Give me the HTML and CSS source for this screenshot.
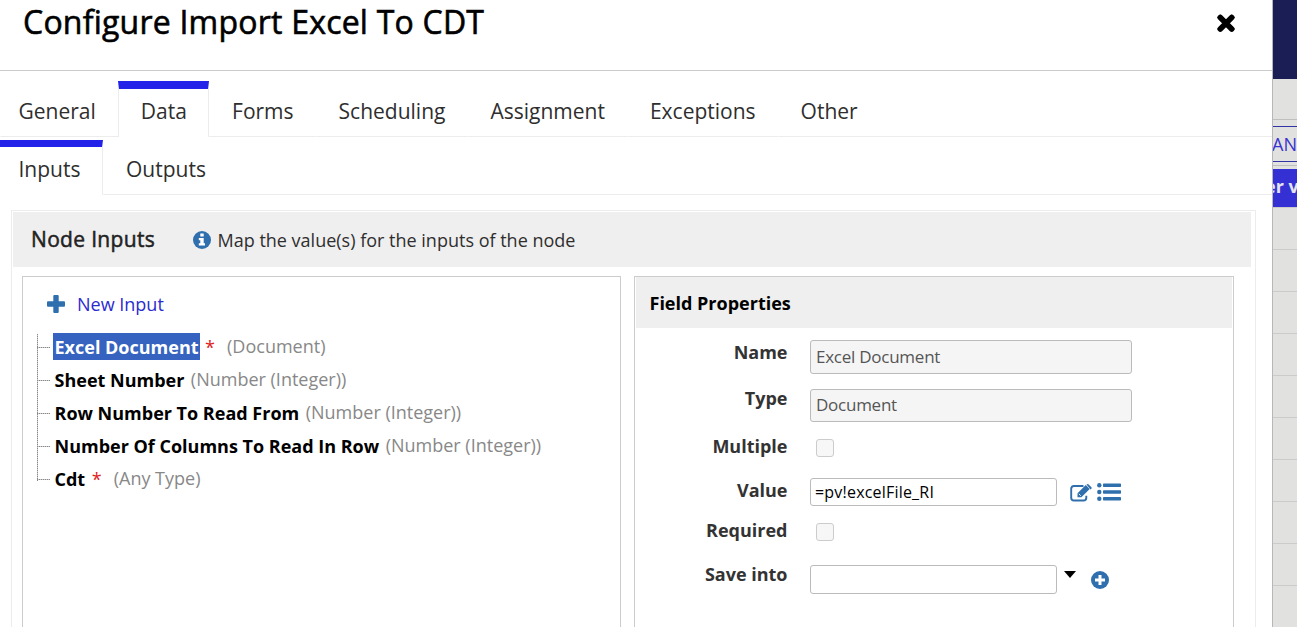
FILE: index.html
```html
<!DOCTYPE html>
<html lang="en">
<head>
  <meta charset="UTF-8">
  <meta name="viewport" content="width=device-width, initial-scale=1.0">
  <title>Configure Import Excel To CDT</title>
  <link rel="stylesheet" href="styles.css">
</head>
<body>
  <div class="page">
    <div class="dialog">
      <header class="dialog-header">
        <h1>Configure Import Excel To CDT</h1>
        <svg class="close" width="20" height="19" viewBox="0 0 20 19"><path d="M4.300 3.500L15.700 14.900M15.700 3.500L4.300 14.900" stroke="#000" stroke-width="4.400" stroke-linecap="square"/><path d="M4.300 3.500L15.700 14.900M15.700 3.500L4.300 14.900" stroke="#000" stroke-width="5.600" stroke-linecap="round"/></svg>
      </header>

      <nav class="tabs">
        <a class="tab">General</a>
        <a class="tab active">Data</a>
        <a class="tab">Forms</a>
        <a class="tab">Scheduling</a>
        <a class="tab">Assignment</a>
        <a class="tab">Exceptions</a>
        <a class="tab">Other</a>
        <span class="tab-rest"></span>
      </nav>

      <nav class="tabs subtabs">
        <a class="tab active">Inputs</a>
        <a class="tab">Outputs</a>
        <span class="tab-rest"></span>
      </nav>

      <section class="panel">
        <div class="panel-header">
          <h2>Node Inputs</h2>
          <svg width="18" height="18" viewBox="0 0 18 18"><circle cx="9" cy="9" r="9" fill="#2f6fad"/><path d="M7.300 2.500h3.400v3H7.300zM5.800 7h4.900v5.200H12v2.300H5.800v-2.300h1.500V9.300H5.800z" fill="#fff"/></svg>
          <span class="hint">Map the value(s) for the inputs of the node</span>
        </div>

        <div class="columns">
          <div class="box">
            <div class="new-input">
              <svg width="18" height="18" viewBox="0 0 18 18"><path d="M7.300 0h3.400q1 0 1 1v5.300H17q1 0 1 1v3.400q0 1-1 1h-5.300V17q0 1-1 1H7.300q-1 0-1-1v-5.300H1q-1 0-1-1V7.300q0-1 1-1h5.300V1q0-1 1-1z" fill="#2f6fad"/></svg>
              <a>New Input</a>
            </div>
            <ul class="tree">
              <li><b class="selected">Excel Document</b><i>*</i><span>(Document)</span></li>
              <li><b>Sheet Number</b><span>(Number (Integer))</span></li>
              <li><b>Row Number To Read From</b><span>(Number (Integer))</span></li>
              <li><b>Number Of Columns To Read In Row</b><span>(Number (Integer))</span></li>
              <li><b>Cdt</b><i>*</i><span>(Any Type)</span></li>
            </ul>
          </div>

          <div class="box">
            <h3>Field Properties</h3>
            <div class="form">
              <div class="row row-name">
                <label>Name</label>
                <div class="field disabled">Excel Document</div>
              </div>
              <div class="row row-type">
                <label>Type</label>
                <div class="field disabled">Document</div>
              </div>
              <div class="row">
                <label>Multiple</label>
                <div class="check"></div>
              </div>
              <div class="row row-value">
                <label>Value</label>
                <div class="field short">=pv!excelFile_RI</div>
                <svg class="edit" width="22" height="18" viewBox="0 0 22 18"><path d="M13.500 2H4Q1.200 2 1.200 4.800v8.900Q1.200 16.500 4 16.500h9.500q2.800 0 2.800-2.800v-2" fill="none" stroke="#2f6fad" stroke-width="1.900"/><path d="M7.500 9.300l8.300-8.300 3.900 3.900-8.300 8.300H7.500z" fill="#2f6fad"/><path d="M16.500.6l.6-.4q.7-.4 1.300.1l3 3q.6.700 0 1.400l-.9.800z" fill="#2f6fad"/><path d="M8.800 9.800l2 2" stroke="#fff" stroke-width=".9"/></svg>
                <svg class="list" width="24" height="18" viewBox="0 0 24 18"><g fill="#2f6fad"><circle cx="2.300" cy="2.200" r="2.200"/><circle cx="2.300" cy="9" r="2.200"/><circle cx="2.300" cy="15.800" r="2.200"/><rect x="6" y=".5" width="18" height="3.500" rx=".7"/><rect x="6" y="7.250" width="18" height="3.500" rx=".7"/><rect x="6" y="14" width="18" height="3.500" rx=".7"/></g></svg>
              </div>
              <div class="row">
                <label>Required</label>
                <div class="check"></div>
              </div>
              <div class="row row-save">
                <label>Save into</label>
                <div class="field short"></div>
                <svg class="caret" width="12" height="7" viewBox="0 0 12 7"><path d="M0 0h12L6 7z" fill="#000"/></svg>
                <svg class="add" width="18" height="18" viewBox="0 0 18 18"><circle cx="9" cy="9" r="9" fill="#2f6fad"/><path d="M9 4v10M4 9h10" stroke="#fff" stroke-width="3"/></svg>
              </div>
            </div>
          </div>
        </div>
      </section>
    </div>

    <!-- page behind the dialog -->
    <aside class="behind">
      <div class="behind-top"></div>
      <div class="behind-bar"></div>
      <div class="behind-btn">AN</div>
      <div class="behind-head">er v</div>
      <div class="behind-rows"></div>
    </aside>
  </div>
</body>
</html>
```

FILE: styles.css
```css
* {
  box-sizing: border-box;
}
body {
  margin: 0;
  font-family: "Open Sans", sans-serif;
  background-color: #fff;
  color: #2e2e2e;
}
h1, h2, h3, ul {
  margin: 0;
  padding: 0;
}
svg {
  display: block;
  flex: none;
}
.page {
  display: flex;
  width: 1297px;
  height: 627px;
  overflow: hidden;
}
.dialog {
  width: 1273px;
  height: 627px;
  border-right: 1px solid #b5b7bb;
  overflow: hidden;
  white-space: nowrap;
}
.dialog-header {
  display: flex;
  justify-content: space-between;
  height: 71px;
  padding: 0 36px 0 23px;
  border-bottom: 1px solid #ccc;
}
h1 {
  font-size: 32px;
  line-height: 44px;
  font-weight: 400;
  letter-spacing: .22px;
  -webkit-text-stroke: .6px #000;
  color: #000;
}
.close {
  margin-top: 14px;
}

/* tabs */
.tabs {
  display: flex;
  height: 66px;
  padding-top: 10px;
  font-size: 21px;
}
.tab {
  padding: 16px 22px 0;
  line-height: 29px;
  border-bottom: 1px solid #ececec;
  border-left: 1px solid transparent;
}
.tab:first-child {
  padding-left: 18px;
  margin-left: -.5px;
}
.tab.active {
  padding-top: 8px;
  padding-right: 21.200px;
  border-top: 8px solid #2222e8;
  border-left: 1px solid #ececec;
  border-right: 1px solid #ececec;
  border-bottom: none;
}
.tab-rest {
  flex: 1;
  border-bottom: 1px solid #ececec;
}
.subtabs {
  height: 58px;
  padding-top: 3px;
}
.subtabs .tab {
  padding-top: 15px;
}
.subtabs .tab.active {
  margin-left: 0;
  padding: 8px 21.500px 0 18.500px;
  border-top-width: 7px;
  border-left: none;
}

/* panel */
.panel {
  width: 1245px;
  height: 440px;
  margin: 15px 0 0 11px;
  padding: 1px;
  border: 1px solid #ececec;
}
.panel-header {
  display: flex;
  align-items: center;
  width: 1238px;
  height: 55px;
  padding-left: 18px;
  background-color: #efefef;
}
h2 {
  width: 161.500px;
  padding-bottom: 2px;
  font-size: 21px;
  font-weight: 400;
  letter-spacing: .32px;
  color: #222;
  -webkit-text-stroke: .5px #222;
}
.hint {
  margin-left: 7px;
  font-size: 18px;
}
.columns {
  display: flex;
  gap: 13px;
  padding: 9px 0 0 9px;
}
.box {
  width: 600px;
  height: 400px;
  border: 1px solid #ccc;
}
.box:first-child {
  width: 599px;
}
.new-input {
  display: flex;
  align-items: center;
  gap: 12px;
  height: 56px;
  padding: 0 0 2px 24px;
  font-size: 18px;
  color: #2b2bd0;
}
.tree {
  width: 530px;
  margin-left: 14px;
  list-style: none;
  font-size: 18px;
  background: repeating-linear-gradient(#888 0 1px, #ccc 1px 2px) 0 1px / 1px 147px no-repeat;
}
.tree li {
  display: flex;
  align-items: center;
  height: 33px;
  padding-left: 16px;
  padding-bottom: 6px;
  background: repeating-linear-gradient(90deg, #888 0 1px, #ccc 1px 2px) 0 14px / 13px 1px no-repeat;
}
.tree b {
  height: 27px;
  padding: 1px 1.500px 0;
  line-height: 27px;
  font-weight: 700;
  color: #000;
}
.tree .selected {
  background-color: #3563bf;
  color: #fff;
}
.tree i {
  width: 22px;
  margin-left: 5px;
  font-style: normal;
  color: #e02020;
}
.tree b + span {
  margin-left: 5px;
}
.tree span {
  position: relative;
  top: -1px;
  color: #888;
}

/* field properties */
h3 {
  height: 51px;
  margin: 0 1px;
  padding-left: 13.500px;
  line-height: 53px;
  font-size: 18px;
  font-weight: 700;
  color: #000;
  background-color: #efefef;
}
.form {
  padding-top: 12px;
}
.row {
  display: flex;
  align-items: flex-start;
  height: 44px;
}
.row label {
  width: 152.500px;
  margin-right: 22.500px;
  text-align: right;
  font-size: 18px;
  line-height: 24px;
  font-weight: 700;
  color: #333;
}
.field {
  width: 322px;
  height: 34px;
  padding: 0 5px;
  border: 1px solid #bbb;
  border-radius: 3px;
  font-size: 17px;
  letter-spacing: -.25px;
  line-height: 32px;
  color: #000;
}
.field.disabled {
  background-color: #f5f5f5;
  color: #555;
}
.field.short {
  width: 247px;
  height: 28px;
  padding: 0 4px;
  font-size: 16px;
  letter-spacing: .2px;
  line-height: 26px;
}
.check {
  width: 18px;
  height: 18px;
  margin: 5px 0 0 6px;
  border: 1px solid #ccc;
  border-radius: 3px;
  background-color: #f7f7f7;
}
.row-name {
  height: 46px;
}
.row-type {
  height: 48px;
}
.row-type .field {
  height: 33px;
  margin-top: 3px;
  line-height: 30px;
}
.row-value {
  height: 40px;
}
.row-save .field.short {
  height: 29px;
  margin-top: 3px;
}
.edit {
  margin: 6px 0 0 13px;
}
.list {
  margin: 5px 0 0 5px;
}
.caret {
  margin: 9px 0 0 7px;
}
.add {
  margin: 9px 0 0 15px;
}

/* strip on the right */
.behind {
  width: 24px;
  background-color: #e1e1df;
  overflow: hidden;
  white-space: nowrap;
}
.behind-top {
  height: 79px;
  background-color: #1b1e54;
}
.behind-bar {
  height: 41px;
  border-bottom: 1px solid #bfbfbf;
}
.behind-btn {
  height: 36px;
  margin-top: 6px;
  border-top: 1px solid #3333a8;
  border-bottom: 1px solid #3333a8;
  font-size: 18px;
  line-height: 35px;
  color: #3a33d2;
  text-indent: -1px;
}
.behind-head {
  position: relative;
  height: 38px;
  margin-top: 7px;
  background-color: #3530d4;
  font-size: 18px;
  line-height: 34px;
  font-weight: 700;
  color: #e4e4ee;
  text-indent: -8px;
}
/* thin rule above the blue header */
.behind-head::before {
  content: "";
  position: absolute;
  top: -4px;
  left: 0;
  width: 24px;
  height: 1px;
  background-color: #bfbfbf;
}
.behind-rows {
  height: 420px;
  background: repeating-linear-gradient(transparent 0 41px, #cbcbcb 41px 42px) 0 1px;
}
```
